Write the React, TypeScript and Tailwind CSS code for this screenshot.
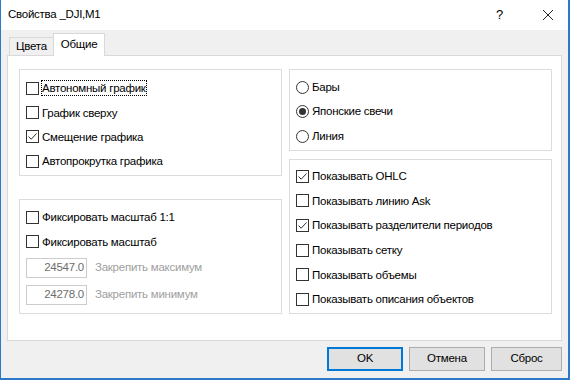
import type { ReactNode } from 'react'

const font = { fontFamily: '"Liberation Sans", Arial, sans-serif' }

function CheckBox({ checked, label, focused, h = 'h-[24.4px]' }: { checked?: boolean; label: string; focused?: boolean; h?: string }) {
  return (
    <div className={`flex items-center ${h}`}>
      <span className="flex h-[13px] w-[13px] shrink-0 items-center justify-center border border-[#333333] bg-white">
        {checked && (
          <svg width="11" height="11" viewBox="0 0 11 11">
            <path d="M1.5 5.5 L4.2 8.2 L9.5 2.5" fill="none" stroke="#333" strokeWidth="1" />
          </svg>
        )}
      </span>
      <span className={`ml-[3px] leading-[14px] ${focused ? 'outline outline-1 outline-dotted outline-black' : ''}`}>{label}</span>
    </div>
  )
}

function Radio({ checked, label }: { checked?: boolean; label: string }) {
  return (
    <div className="flex h-[24.5px] items-center">
      <span className="flex h-[13px] w-[13px] items-center justify-center rounded-full border border-[#333333] bg-white">
        {checked && <span className="h-[7px] w-[7px] rounded-full bg-[#333333]" />}
      </span>
      <span className="ml-[3px]">{label}</span>
    </div>
  )
}

function Group({ className, children }: { className: string; children: ReactNode }) {
  return <div className={`border border-[#dcdcdc] pl-[6px] ${className}`}>{children}</div>
}

function Field({ value, label }: { value: string; label: string }) {
  return (
    <div className="flex h-5 items-center">
      <div className="flex h-5 w-[61px] items-center justify-end border border-[#cccccc] pr-[2px] text-[#6d6d6d]">{value}</div>
      <span className="ml-2 text-[#a0a0a0]">{label}</span>
    </div>
  )
}

function Button({ label, primary, w = 'w-[76px]' }: { label: string; primary?: boolean; w?: string }) {
  return (
    <button
      className={`flex h-[24px] items-center justify-center bg-[#e1e1e1] ${w} ${
        primary ? 'border-2 border-[#0078d7]' : 'border border-[#adadad]'
      }`}
    >
      {label}
    </button>
  )
}

export default function App() {
  return (
    <div
      className="flex h-[380px] w-[570px] flex-col border-b-2 border-l border-r-2 border-[#2b79c7] bg-[#f0f0f0] text-[11.5px] tracking-[-0.25px] text-black"
      style={font}
    >
      {/* Title bar */}
      <div className="flex h-[30px] items-center bg-white pl-[7px]">
        <span className="flex-1 text-[11.5px]">Свойства _DJI,M1</span>
        <span className="w-[14px] text-[13px]">?</span>
        <svg className="ml-[32px] mr-[14px]" width="12" height="12" viewBox="0 0 12 12">
          <path d="M1 1 L11 11 M11 1 L1 11" stroke="#222" strokeWidth="1" />
        </svg>
      </div>

      {/* Tabs */}
      <div className="flex h-[25px] items-end pl-[8px] pt-[3px]">
        <div className="flex h-[18px] items-center border border-b-0 border-[#d9d9d9] px-[6px]">Цвета</div>
        <div className="z-10 -mb-px -ml-px flex h-[23px] items-center border border-b-0 border-[#d9d9d9] bg-white px-[7px]">
          Общие
        </div>
      </div>

      {/* Panel */}
      <div className="mx-[6px] flex h-[286px] gap-[7px] border border-[#d9d9d9] bg-white pl-[11px] pt-[13px]">
        <div className="flex w-[263px] flex-col gap-[23px]">
          <Group className="h-[107px] pt-[6px]">
            <CheckBox label="Автономный график" focused />
            <CheckBox label="График сверху" />
            <CheckBox label="Смещение графика" checked />
            <CheckBox label="Автопрокрутка графика" />
          </Group>
          <Group className="h-[115px] pt-[5px]">
            <CheckBox label="Фиксировать масштаб 1:1" />
            <CheckBox label="Фиксировать масштаб" />
            <div className="mt-[4px] flex flex-col gap-[7px]">
              <Field value="24547.0" label="Закрепить максимум" />
              <Field value="24278.0" label="Закрепить минимум" />
            </div>
          </Group>
        </div>
        <div className="flex w-[263px] flex-col gap-[8px]">
          <Group className="h-[82px] pt-[5px]">
            <Radio label="Бары" />
            <Radio label="Японские свечи" checked />
            <Radio label="Линия" />
          </Group>
          <Group className="h-[155px] pt-[4px]">
            <CheckBox h="h-[24.6px]" label="Показывать OHLC" checked />
            <CheckBox h="h-[24.6px]" label="Показывать линию Ask" />
            <CheckBox h="h-[24.6px]" label="Показывать разделители периодов" checked />
            <CheckBox h="h-[24.6px]" label="Показывать сетку" />
            <CheckBox h="h-[24.6px]" label="Показывать объемы" />
            <CheckBox h="h-[24.6px]" label="Показывать описания объектов" />
          </Group>
        </div>
      </div>

      {/* Footer */}
      <div className="flex flex-1 items-start justify-end gap-[6px] pr-[6px] pt-[6px]">
        <Button label="OK" primary />
        <Button label="Отмена" />
        <Button label="Сброс" w="w-[71px]" />
      </div>
    </div>
  )
}
